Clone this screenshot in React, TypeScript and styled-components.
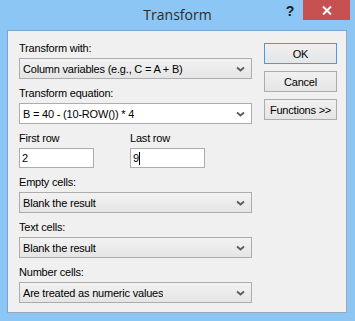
import React from "react";
import styled, { createGlobalStyle } from "styled-components";

const GlobalStyle = createGlobalStyle`
  html, body {
    margin: 0;
    padding: 0;
    background: #8cc6f5;
  }
  * {
    box-sizing: border-box;
  }
`;

const Chevron = () => (
  <svg width="9" height="6" viewBox="0 0 9 6">
    <path d="M1 1.5 L4.5 4.5 L8 1.5" fill="none" stroke="#5a5a5a" strokeWidth="1.8" />
  </svg>
);

const Select = ({ value, editable }: { value: string; editable?: boolean }) => (
  <SelectBox $editable={editable}>
    <SelectText>{value}</SelectText>
    <Chevron />
  </SelectBox>
);

const App = () => {
  return (
    <Window>
      <GlobalStyle />
      <TitleBar>
        <Title>Transform</Title>
        <HelpButton>?</HelpButton>
        <CloseButton>
          <svg width="10" height="9" viewBox="0 0 10 9">
            <path d="M1 0.5 L9 8.5 M9 0.5 L1 8.5" stroke="#fff" strokeWidth="2" />
          </svg>
        </CloseButton>
      </TitleBar>
      <Client>
        <FormColumn>
          <Field>
            <Label>Transform with:</Label>
            <Select value="Column variables (e.g., C = A + B)" />
          </Field>
          <Field>
            <Label>Transform equation:</Label>
            <Select value="B = 40 - (10-ROW()) * 4" editable />
          </Field>
          <RowPair>
            <Field>
              <Label>First row</Label>
              <TextBox>2</TextBox>
            </Field>
            <Field>
              <Label>Last row</Label>
              <TextBox>
                9<Caret />
              </TextBox>
            </Field>
          </RowPair>
          <Field>
            <Label>Empty cells:</Label>
            <Select value="Blank the result" />
          </Field>
          <Field>
            <Label>Text cells:</Label>
            <Select value="Blank the result" />
          </Field>
          <Field>
            <Label>Number cells:</Label>
            <Select value="Are treated as numeric values" />
          </Field>
        </FormColumn>
        <ButtonColumn>
          <Button $primary>OK</Button>
          <Button>Cancel</Button>
          <Button>Functions &gt;&gt;</Button>
        </ButtonColumn>
      </Client>
    </Window>
  );
};

export default App;

const Window = styled.div`
  width: 355px;
  height: 321px;
  display: flex;
  flex-direction: column;
  background: #8cc6f5;
  font-family: "Liberation Sans", Arial, sans-serif;
  font-size: 11px;
  letter-spacing: -0.2px;
  color: #000;
`;

const TitleBar = styled.div`
  height: 30px;
  flex: none;
  position: relative;
  display: flex;
  justify-content: center;
`;

const Title = styled.div`
  font-family: "Open Sans", "Noto Sans", sans-serif;
  font-size: 14px;
  letter-spacing: 0;
  color: #2b2b2b;
  line-height: 30px;
`;

const HelpButton = styled.div`
  position: absolute;
  left: 284px;
  top: 3px;
  width: 12px;
  text-align: center;
  font-family: "Liberation Sans", Arial, sans-serif;
  font-weight: bold;
  font-size: 14px;
  color: #1a1a1a;
`;

const CloseButton = styled.div`
  position: absolute;
  left: 303px;
  top: 0;
  width: 47px;
  height: 20px;
  background: #c75050;
  display: flex;
  align-items: center;
  justify-content: center;
`;

const Client = styled.div`
  flex: 1;
  margin: 0 8px 8px 7px;
  background: #f0f0f0;
  border: 1px solid #75a5d5;
  border-right-color: #9aa8b6;
  border-bottom-color: #9aa8b6;
  display: flex;
  gap: 12px;
  padding: 11px 0 0 11px;
`;

const FormColumn = styled.div`
  width: 233px;
  display: flex;
  flex-direction: column;
  gap: 8px;
`;

const ButtonColumn = styled.div`
  width: 73px;
  display: flex;
  flex-direction: column;
  gap: 7px;
  padding-top: 1px;
`;

const Field = styled.div`
  display: flex;
  flex-direction: column;
  gap: 3px;
`;

const RowPair = styled.div`
  display: grid;
  grid-template-columns: 111px 111px;
`;

const Label = styled.div`
  line-height: 13px;
  height: 13px;
  white-space: nowrap;
`;

const SelectBox = styled.div<{ $editable?: boolean }>`
  height: 21px;
  border: 1px solid ${(p) => (p.$editable ? "#abadb3" : "#acacac")};
  background: ${(p) =>
    p.$editable ? "#ffffff" : "linear-gradient(#f2f2f2, #e5e5e5)"};
  display: flex;
  align-items: center;
  justify-content: space-between;
  padding: 0 6px 0 3px;
`;

const SelectText = styled.span`
  white-space: nowrap;
  overflow: hidden;
`;

const TextBox = styled.div`
  width: 75px;
  height: 20px;
  border: 1px solid #abadb3;
  background: #fff;
  display: flex;
  align-items: center;
  padding: 0 2px;
`;

const Caret = styled.span`
  display: inline-block;
  width: 1px;
  height: 13px;
  background: #000;
`;

const Button = styled.div<{ $primary?: boolean }>`
  height: 21px;
  border: 1px solid ${(p) => (p.$primary ? "#4a9be3" : "#acacac")};
  background: linear-gradient(#f0f0f0, #e5e5e5);
  display: flex;
  align-items: center;
  justify-content: center;
  white-space: nowrap;
`;
